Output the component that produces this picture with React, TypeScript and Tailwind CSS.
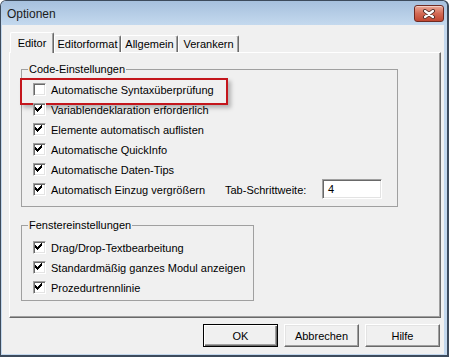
// Optionen dialog (VBA editor options, Editor tab)

import React from "react";

// classic checkmark: x offset, y start of each 3px column
const CHECK: [number, number][] = [
    [2, 4],
    [3, 5],
    [4, 6],
    [5, 5],
    [6, 4],
    [7, 3],
    [8, 2],
];

function CheckBox({ checked }: { checked: boolean }) {
    return (
        <div className="w-[13px] h-[13px] shrink-0 bg-white border border-t-[#a0a0a0] border-l-[#a0a0a0] border-r-white border-b-white shadow-[inset_1px_1px_0_#696969,inset_-1px_-1px_0_#e3e3e3]">
            {checked && (
                <svg width="11" height="11" viewBox="0 0 11 11" shapeRendering="crispEdges">
                    {CHECK.map(([x, y]) => (
                        <rect key={x} x={x - 1} y={y - 1} width="1" height="3" fill="#000" />
                    ))}
                </svg>
            )}
        </div>
    );
}

function CheckRow({
    label,
    checked = true,
    children,
}: {
    label: string;
    checked?: boolean;
    children?: React.ReactNode;
}) {
    return (
        <div className="relative h-[20px] flex items-center gap-[5px]">
            <CheckBox checked={checked} />
            <span className="mt-[2px] leading-[13px] whitespace-nowrap">{label}</span>
            {children}
        </div>
    );
}

function Tab({ label, width, active }: { label: string; width: string; active?: boolean }) {
    if (active) {
        return (
            <div
                className={`relative z-10 -mb-px h-[21px] ${width} flex justify-center pt-[4px] leading-[13px] bg-[#f0f0f0] border-t border-l border-white border-r border-r-[#696969] rounded-t-[2px] shadow-[inset_-1px_0_0_#a0a0a0]`}
            >
                {label}
            </div>
        );
    }
    return (
        <div
            className={`h-[17px] ${width} flex justify-center pt-[2px] leading-[13px] border-t border-l border-white border-r border-r-[#696969] rounded-t-[2px] shadow-[inset_-1px_0_0_#a0a0a0]`}
        >
            {label}
        </div>
    );
}

function DialogButton({ label, isDefault }: { label: string; isDefault?: boolean }) {
    return (
        <button
            className={
                isDefault
                    ? "w-[75px] h-[23px] flex items-center justify-center bg-[#f0f0f0] border border-black shadow-[inset_1px_1px_0_white,inset_-1px_-1px_0_#696969,inset_-2px_-2px_0_#a0a0a0]"
                    : "w-[75px] h-[23px] flex items-center justify-center bg-[#f0f0f0] border border-t-white border-l-white border-r-[#696969] border-b-[#696969] shadow-[inset_-1px_-1px_0_#a0a0a0,inset_1px_1px_0_#e3e3e3]"
            }
        >
            <span className="mt-px leading-[13px]">{label}</span>
        </button>
    );
}

function CloseButton() {
    return (
        <div className="mt-[4px] w-[30px] h-[17px] rounded-[3px] border border-[#6e2a22] bg-gradient-to-b from-[#e9a897] via-[#d36a55] to-[#c04631] shadow-[inset_0_1px_0_rgba(255,255,255,0.45)] flex items-center justify-center">
            <svg width="14" height="10" viewBox="0 0 14 10">
                <path d="M3 2 L11 8 M11 2 L3 8" stroke="#4a2a24" strokeWidth="4" strokeLinecap="round" />
                <path d="M3 2 L11 8 M11 2 L3 8" stroke="#ffffff" strokeWidth="2.2" strokeLinecap="round" />
            </svg>
        </div>
    );
}

export default function App() {
    return (
        <div className="w-[449px] h-[357px] bg-[#3d4b5c] rounded-t-[6px] pt-px pl-px pr-[2px] pb-[2px] font-[family-name:'Liberation_Sans',Arial,sans-serif] text-[11px] text-black">
            <div className="h-full flex flex-col bg-[#c3d8ee] rounded-t-[5px]">
                {/* Title bar */}
                <div className="h-[24px] shrink-0 flex items-start justify-between pl-[6px] pr-[3px] bg-gradient-to-b from-[#a6c0dd] to-[#c4d9ee] rounded-t-[5px]">
                    <span className="mt-[6px] text-[12px] leading-[14px] text-[#1b1b1b]">Optionen</span>
                    <CloseButton />
                </div>

                {/* Client area */}
                <div className="flex-1 ml-px mr-[3px] mb-px bg-[#f0f0f0] pt-[7px] pl-[7px] pr-[3px]">
                    {/* Tabs */}
                    <div className="h-[20px] flex items-end pl-px">
                        <Tab label="Editor" width="w-[44px]" active />
                        <Tab label="Editorformat" width="w-[67px]" />
                        <Tab label="Allgemein" width="w-[57px]" />
                        <Tab label="Verankern" width="w-[61px]" />
                    </div>

                    {/* Tab panel */}
                    <div className="h-[266px] border-t border-l border-white border-r border-b border-r-[#696969] border-b-[#696969] shadow-[inset_-1px_-1px_0_#a0a0a0]">
                        <fieldset className="mt-[10px] ml-[11px] w-[377px] border border-[#a0a0a0] p-0">
                            <legend className="ml-[6px] px-px leading-[13px]">Code-Einstellungen</legend>
                            <div className="pl-[11px] pt-[3px] pb-[7px]">
                                <CheckRow label="Automatische Syntaxüberprüfung" checked={false}>
                                    {/* highlight frame */}
                                    <div className="absolute -left-[13px] -top-px w-[208px] h-[27px] border-2 border-[#c4161c] shadow-[3px_3px_4px_rgba(0,0,0,0.25)]" />
                                </CheckRow>
                                <CheckRow label="Variablendeklaration erforderlich" />
                                <CheckRow label="Elemente automatisch auflisten" />
                                <CheckRow label="Automatische QuickInfo" />
                                <CheckRow label="Automatische Daten-Tips" />
                                <div className="h-[20px] flex items-center">
                                    <div className="w-[192px] flex items-center gap-[5px]">
                                        <CheckBox checked />
                                        <span className="mt-[2px] leading-[13px] whitespace-nowrap">
                                            Automatisch Einzug vergrößern
                                        </span>
                                    </div>
                                    <span className="w-[97px] mt-[2px] leading-[13px] whitespace-nowrap">
                                        Tab-Schrittweite:
                                    </span>
                                    <div className="w-[60px] h-[20px] flex items-center pl-[5px] bg-white border border-t-[#a0a0a0] border-l-[#a0a0a0] border-r-white border-b-white shadow-[inset_1px_1px_0_#696969,inset_-1px_-1px_0_#e3e3e3]">
                                        <span className="mt-px leading-[13px]">4</span>
                                    </div>
                                </div>
                            </div>
                        </fieldset>

                        <fieldset className="mt-[12px] ml-[11px] w-[233px] border border-[#a0a0a0] p-0">
                            <legend className="ml-[6px] px-px leading-[13px]">Fenstereinstellungen</legend>
                            <div className="pl-[11px] pt-[5px] pb-[3px]">
                                <CheckRow label="Drag/Drop-Textbearbeitung" />
                                <CheckRow label="Standardmäßig ganzes Modul anzeigen" />
                                <CheckRow label="Prozedurtrennlinie" />
                            </div>
                        </fieldset>
                    </div>

                    {/* Buttons */}
                    <div className="mt-[6px] mr-px flex justify-end gap-[6px]">
                        <DialogButton label="OK" isDefault />
                        <DialogButton label="Abbrechen" />
                        <DialogButton label="Hilfe" />
                    </div>
                </div>
            </div>
        </div>
    );
}
